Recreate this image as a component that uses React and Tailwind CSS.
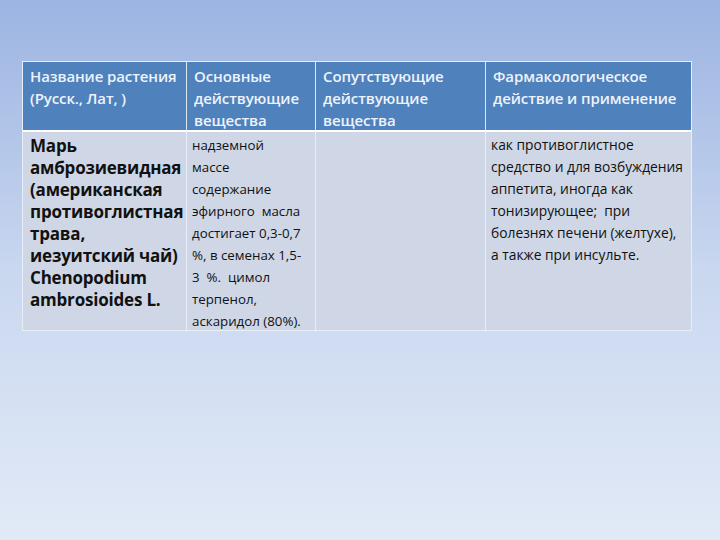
import React from "react"

const head = [
  ["Название растения", "(Русск., Лат, )"],
  ["Основные", "действующие", "вещества"],
  ["Сопутствующие", "действующие", "вещества"],
  ["Фармакологическое", "действие и применение"],
]

const plant = [
  "Марь",
  "амброзиевидная",
  "(американская",
  "противоглистная",
  "трава,",
  "иезуитский чай)",
  "Chenopodium",
  "ambrosioides L.",
]

const main = [
  "надземной",
  "массе",
  "содержание",
  "эфирного  масла",
  "достигает 0,3-0,7",
  "%, в семенах 1,5-",
  "3  %.  цимол",
  "терпенол,",
  "аскаридол (80%).",
]

const action = [
  "как противоглистное",
  "средство и для возбуждения",
  "аппетита, иногда как",
  "тонизирующее;  при",
  "болезнях печени (желтухе),",
  "а также при инсульте.",
]

const Lines = ({ items }) =>
  items.map((t, i) => (
    <div key={i} className="whitespace-pre">
      {t}
    </div>
  ))

const App = () => {
  return (
    <div
      className="w-[720px] h-[540px] bg-gradient-to-b from-[#9cb4e2] via-[#c9d7ef] to-[#e2eaf7] pt-[61px] pl-[22px]"
      style={{ fontFamily: "'Open Sans', 'Noto Sans', sans-serif" }}
    >
      <div className="w-[670px] border border-[#e8eef8]">
        <div className="grid grid-cols-[164px_129px_170px_205px] bg-[#4f81bd] text-[#eef3fb] text-[15px] font-semibold leading-[22px] tracking-[-0.1px] h-[70px] border-b-2 border-white">
          {head.map((h, i) => (
            <div key={i} className={"pl-[7px] pt-[3px] " + (i < 3 ? "border-r border-[#dfe7f3]" : "")}>
              <Lines items={h} />
            </div>
          ))}
        </div>
        <div className="grid grid-cols-[164px_129px_170px_205px] bg-[#cfd7e6] text-[#111] h-[198px]">
          <div className="pl-[7px] pt-[3px] border-r border-[#e8eef8] text-[17px] leading-[22px] font-bold tracking-[-0.2px]">
            <Lines items={plant} />
          </div>
          <div className="pl-[5px] pt-[2px] border-r border-[#e8eef8] text-[13.3px] leading-[22px]">
            <Lines items={main} />
          </div>
          <div className="border-r border-[#e8eef8]"></div>
          <div className="pl-[5px] pt-[2px] text-[13.8px] leading-[22px]">
            <Lines items={action} />
          </div>
        </div>
      </div>
    </div>
  )
}

export default App
